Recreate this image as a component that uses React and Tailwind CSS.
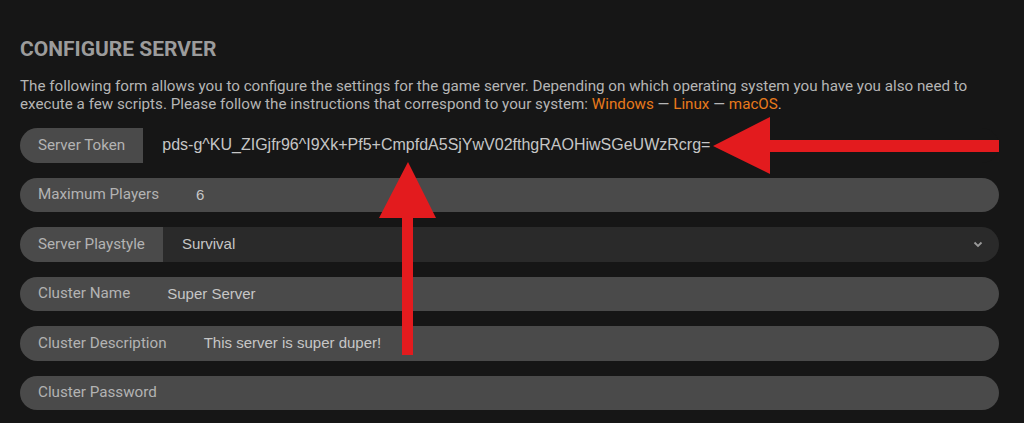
import React from "react";

function Row({ label, value, inputBg = "bg-[#4a4a4a]", chevron = false, valueSize = "text-[15px]" }) {
  return (
    <div className="flex h-[34.5px] w-full mb-[15px]">
      <div className="flex items-center pl-[18px] pr-[18px] rounded-l-full bg-[#4a4a4a] text-[#b3b3b3] text-[15.2px] whitespace-nowrap">
        {label}
      </div>
      <div
        className={`flex-1 flex items-center justify-between pl-[19px] pr-[16px] rounded-r-full ${inputBg} text-[#c6c6c6] ${valueSize} whitespace-nowrap`}
        style={{ fontFamily: "'Liberation Sans', Arial, sans-serif" }}
      >
        <span>{value}</span>
        {chevron && (
          <svg width="10" height="7" viewBox="0 0 10 7">
            <path d="M1.5 1.5 L5 5 L8.5 1.5" fill="none" stroke="#9a9a9a" strokeWidth="1.8" />
          </svg>
        )}
      </div>
    </div>
  );
}

export default function App() {
  return (
    <div
      className="relative w-[1024px] h-[423px] overflow-hidden bg-[#161616]"
      style={{ fontFamily: "Roboto, 'Liberation Sans', sans-serif" }}
    >
      <div className="pl-[20px] pr-[25px] pt-[36px]">
        <h1 className="text-[21px] leading-[26px] font-bold text-[#9c9c9c] mb-[15px]">CONFIGURE SERVER</h1>
        <p className="text-[15.2px] leading-[18px] text-[#b5b5b5] mb-[15px]">
          The following form allows you to configure the settings for the game server. Depending on which operating system you have you also need to execute a few scripts. Please follow the instructions that correspond to your system:{" "}
          <span className="text-[#e87a1c]">Windows</span> — <span className="text-[#e87a1c]">Linux</span> —{" "}
          <span className="text-[#e87a1c]">macOS</span>.
        </p>
        <Row label="Server Token" value="pds-g^KU_ZIGjfr96^I9Xk+Pf5+CmpfdA5SjYwV02fthgRAOHiwSGeUWzRcrg=" inputBg="bg-[#161616]" valueSize="text-[16px]" />
        <Row label="Maximum Players" value="6" />
        <Row label="Server Playstyle" value="Survival" inputBg="bg-[#2a2a2a]" chevron />
        <Row label="Cluster Name" value="Super Server" />
        <Row label="Cluster Description" value="This server is super duper!" />
        <Row label="Cluster Password" value="" />
      </div>
      <svg className="absolute left-0 top-0 pointer-events-none" width="1024" height="423" viewBox="0 0 1024 423">
        <polygon points="713,146 770,117 770,140 999,140 999,152 770,152 770,174" fill="#e31b1e" />
        <polygon points="408,162 436,218 413,218 413,355 402,355 402,218 379,218" fill="#e31b1e" />
      </svg>
    </div>
  );
}
